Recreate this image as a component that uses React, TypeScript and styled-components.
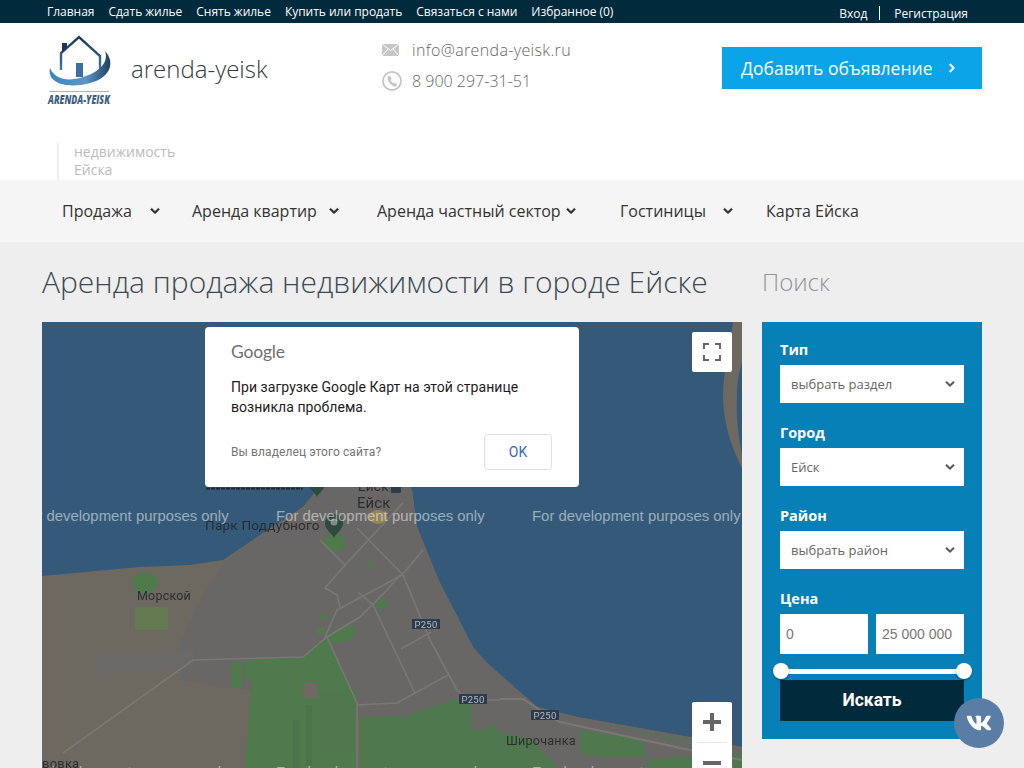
import React from "react";
import styled, { createGlobalStyle } from "styled-components";
import { FaChevronDown, FaChevronRight, FaVk } from "react-icons/fa";

const Global = createGlobalStyle`
  html, body { margin: 0; padding: 0; overflow: hidden; background: #eeeeee; }
  * { box-sizing: border-box; }
  #root { height: 768px; overflow: hidden; font-family: "Open Sans", "Liberation Sans", sans-serif; }
`;

const Page = styled.div`width: 1024px; height: 768px; overflow: hidden; position: relative;`;

const TopBar = styled.div`
  height: 23px; background: #022a3d; display: flex; justify-content: space-between; padding: 0 56px 0 47px;
`;
const TopLinks = styled.div`display: flex; gap: 14px; align-items: center; height: 23px;`;
const TopLink = styled.a`color: #fff; font-size: 12px; line-height: 23px; white-space: nowrap; letter-spacing: -.02px;`;
const AuthLinks = styled.div`display: flex; align-items: center; height: 23px; padding-top: 3px;`;
const AuthSep = styled.span`width: 1px; height: 14px; background: #fff; margin: 0 14px 0 12px;`;

const Header = styled.header`background: #fff; height: 157px; padding-top: 12px;`;
const HeaderRow = styled.div`display: flex; height: 108px;`;
const Brand = styled.div`width: 382px; padding-left: 47px; display: flex; align-items: flex-start; gap: 19px;`;
const BrandName = styled.div`
  font-size: 24px; font-weight: 300; color: #333b42; line-height: 33px; margin-top: 17px;
`;
const Contacts = styled.div`width: 340px; display: flex; flex-direction: column; gap: 9px; padding-top: 4px;`;
const ContactRow = styled.div<{ $spacing?: number }>`
  display: flex; align-items: center; height: 22px; gap: 10px; font-size: 16px; font-weight: 300; color: #666;
  letter-spacing: ${p => p.$spacing ?? 0}px;
`;
const AddButton = styled.a`
  width: 260px; height: 42px; margin-top: 12px; background: #0ba4e8; color: #fff; display: flex; align-items: center;
  padding-left: 19px; gap: 15px; font-size: 17.5px; font-weight: 400; white-space: nowrap;
  svg { width: 10px; height: 10px; stroke: currentColor; stroke-width: 30px; }
`;
const Tagline = styled.div`
  margin-left: 57px; padding: 0 0 0 15px; border-left: 2px solid #eeeeee; height: 37px;
  font-size: 14px; line-height: 18px; color: #bcbcbc;
`;

const Nav = styled.nav`
  height: 62px; background: #f5f5f5; padding-left: 62px; display: grid;
  grid-template-columns: 130px 185px 243px 146px auto; align-items: center;
`;
const NavItem = styled.a<{ $w?: number }>`
  display: flex; justify-content: space-between; align-items: center; width: ${p => (p.$w ? `${p.$w}px` : "auto")};
  font-size: 16px; color: #333; white-space: nowrap;
  svg { width: 10px; height: 10px; color: #2b2b2b; stroke: currentColor; stroke-width: 30px; }
`;

const Main = styled.main`
  display: grid; grid-template-columns: 700px 220px; grid-template-rows: 80px auto; column-gap: 20px; padding-left: 42px;
`;
const Title = styled.h1`
  margin: 0; align-self: center; font-size: 30px; font-weight: 300; color: #3d4a52; line-height: 82px; white-space: nowrap;
`;
const SearchTitle = styled.h2`
  margin: 0; align-self: center; font-size: 24px; font-weight: 300; color: #8f9498; line-height: 82px;
`;

const MapBox = styled.div`position: relative; width: 700px; height: 520px; overflow: hidden; background: #355a79;`;
const MapSvg = styled.svg`display: block; position: absolute; left: 0; top: 0;`;
const SoftLayer = styled.g`filter: blur(.45px);`;

const Dialog = styled.div`
  position: absolute; left: 163px; top: 5px; width: 374px; height: 160px; background: #fff; border-radius: 4px;
  padding: 15px 26px 0; font-family: Roboto, sans-serif;
`;
const GoogleWord = styled.div`
  font-family: Lato, "Open Sans", sans-serif; font-size: 17.5px; line-height: 20px; color: #6f6f6f; letter-spacing: -.2px;
`;
const DialogText = styled.div`margin-top: 15px; font-size: 14px; line-height: 20px; color: #1c1c1c; font-weight: 400; letter-spacing: .05px;`;
const DialogFoot = styled.div`display: flex; justify-content: space-between; align-items: center; margin-top: 17px;`;
const OwnerLink = styled.span`font-size: 12px; color: #757575; letter-spacing: .1px;`;
const OkButton = styled.button`
  width: 68px; height: 36px; background: #fff; border: 1px solid #e0e0e0; border-radius: 4px; margin-right: 1px;
  font-family: Roboto, sans-serif; font-size: 14px; color: #3a66c4; padding: 0;
`;
const MapControl = styled.div<{ $top: number }>`
  position: absolute; right: 10px; top: ${p => p.$top}px; width: 40px; background: #fff; border-radius: 2px;
  display: flex; flex-direction: column; align-items: center;
`;
const ControlCell = styled.div`width: 40px; height: 40px; display: flex; align-items: center; justify-content: center;`;
const ControlRule = styled.div`width: 30px; height: 1px; background: #e6e6e6;`;

const Panel = styled.aside`
  width: 220px; height: 417px; background: #0780b7; padding: 19px 18px;
`;
const Field = styled.div`margin-bottom: 21px;`;
const Label = styled.div`color: #fff; font-size: 14.5px; font-weight: 700; line-height: 18px; margin-bottom: 6px;`;
const SelectBox = styled.div`
  height: 38px; background: #fff; display: flex; align-items: center; justify-content: space-between;
  padding: 0 9px 0 11px; font-size: 13px; color: #666;
  svg { width: 10px; height: 10px; color: #555; stroke: currentColor; stroke-width: 24px; }
`;
const PriceRow = styled.div`display: flex; gap: 8px;`;
const PriceInput = styled.input`
  width: 88px; height: 40px; border: 0; padding: 0 0 0 6px; background: #fff; outline: none;
  font-family: "Liberation Sans", sans-serif; font-size: 14px; color: #777;
`;
const SliderTrack = styled.div`position: relative; height: 5px; background: #fff; margin-top: 15px; margin-bottom: 6px;`;
const Thumb = styled.span<{ $side: "left" | "right" }>`
  position: absolute; top: -6px; ${p => (p.$side === "left" ? "left: -7px" : "right: -8px")}; width: 16px; height: 16px;
  border-radius: 50%; background: #fff; box-shadow: 0 1px 2px rgba(0, 0, 0, .45);
`;
const SearchButton = styled.button`
  display: block; width: 184px; height: 41px; border: 0; background: #022a3d; color: #fff; padding: 0 0 2px;
  font-family: Roboto, sans-serif; font-size: 17.5px; font-weight: 700;
`;
const VkBadge = styled.a`
  position: absolute; left: 954px; top: 698px; width: 50px; height: 50px; border-radius: 50%; background: #5a7da6;
  display: flex; align-items: center; justify-content: center; color: #fff;
  svg { width: 26px; height: 26px; }
`;

const Logo = () => (
  <svg width="65" height="74" viewBox="47 35 65 74" style={{ flex: "none" }}>
    <defs>
      <linearGradient id="roof" x1="0" y1="0" x2="0" y2="1">
        <stop offset="0" stopColor="#1f3650" />
        <stop offset="1" stopColor="#3f78a8" />
      </linearGradient>
      <linearGradient id="swoosh" x1="0" y1="0" x2="1" y2="0">
        <stop offset="0" stopColor="#3d84bd" />
        <stop offset=".6" stopColor="#5b97c6" />
        <stop offset="1" stopColor="#1f3f5f" />
      </linearGradient>
    </defs>
    <path d="M61 70V53L79 37l21 19v14" fill="none" stroke="url(#roof)" strokeWidth="2.4" />
    <path d="M62 53V43h5v5z" fill="#1f3650" />
    <rect x="76" y="63" width="7" height="14" fill="#3a6f9f" />
    <path d="M50 68C47 80 60 86 74 85.5 93 85 113 77 110 60c-1-4-3-7-5-9 4 11-5 22-25 27-12 3-25 2-30-10z" fill="url(#swoosh)" />
    <rect x="49" y="91" width="60" height="1" fill="#b5b5b5" />
    <text x="48" y="103.5" textLength="62" lengthAdjust="spacingAndGlyphs" fontFamily="'Open Sans', sans-serif" fontStyle="italic" fontWeight="800" fontSize="12.5" fill="#3f5f82">ARENDA-YEISK</text>
  </svg>
);

const MailIcon = () => (
  <svg width="20" height="22" viewBox="0 0 20 22">
    <rect x="0" y="5" width="17" height="12" fill="#c6c6c6" />
    <path d="M0 5l8.5 6.5L17 5M0 17l6-7M17 17l-6-7" fill="none" stroke="#fff" strokeWidth="1" />
  </svg>
);
const PhoneIcon = () => (
  <svg width="20" height="22" viewBox="0 0 20 22">
    <circle cx="10" cy="11" r="9.1" fill="none" stroke="#c4c4c4" strokeWidth="1.7" />
    <path d="M6.6 5.9c-1.3 1-1.3 2.800-.3 4.800 1.100 2.300 3 4.500 5.300 5.500 1.300.6 2.500.4 3.100-.5l.5-1-2.600-2-1.100.9c-1.200-.7-2.400-2.100-2.900-3.500l1-1.100-1.500-3.100z" fill="#c4c4c4" />
  </svg>
);

const Shield = ({ x, y }: { x: number; y: number }) => (
  <g>
    <rect x={x} y={y} width="28" height="10" fill="#2e3b4d" />
    <text x={x + 14} y={y + 8.5} textAnchor="middle" fontFamily="Roboto, sans-serif" fontSize="9.5" fill="#b4bcc4" letterSpacing=".3">Р250</text>
  </g>
);
const Pin = ({ x, y }: { x: number; y: number }) => (
  <g>
    <path d={`M${x} ${y + 14}c-2-5-9-8-9-15a9 9 0 0 1 18 0c0 7-7 10-9 15z`} fill="#2d4a3c" />
    <circle cx={x} cy={y - 2} r="3.5" fill="#7f8f86" />
  </g>
);
const Mark = ({ x, y }: { x: number; y: number }) => (
  <text x={x} y={y} fontFamily="'Liberation Sans', sans-serif" fontSize="14.9" fill="#fff" fillOpacity=".5">For development purposes only</text>
);
const PlaceName = ({ x, y, size = 13, children }: { x: number; y: number; size?: number; children: string }) => (
  <text x={x} y={y} fontFamily="Roboto, sans-serif" fontSize={size} fill="#23282c" fillOpacity=".9" letterSpacing=".2">{children}</text>
);

/* map coordinates are page coordinates, the viewBox shifts them by the map's origin */
const Road = ({ d, w = 1.6 }: { d: string; w?: number }) => (
  <path d={d} fill="none" stroke="#7b7775" strokeWidth={w} />
);

const MapDrawing = () => (
  <MapSvg width="700" height="520" viewBox="42 322 700 520">
    <rect x="42" y="322" width="700" height="520" fill="#355a79" />
    <SoftLayer>
      <path d="M42 576L140 567 190 565 223 560 263 533 303 507 317 490 340 470 400 470 412 490 417 527 440 583 473 647 487 663 537 707 577 717 690 737 742 747V842H42z" fill="#6d6961" />
      <path d="M180 642L200 600 225 560 263 533 303 507 317 490 340 470 400 470 412 490 417 527 440 583 473 647 487 663 537 707 577 717 690 737 742 747V842H360V720L250 690 180 680z" fill="#696766" />
      <path d="M733 322C731 345 723 370 723 395 723 425 733 450 742 468V455C738 435 736 415 737 395 737 380 740 370 742 362V322z" fill="#6d6961" />
      <path d="M96 652h60l37-4v20l-97 6z" fill="#6b6868" />
      <path d="M133 577l13-5 12 6 0 8-8 7h-13l-4-8z" fill="#4f7a4b" />
      <path d="M135 607h33v23h-33z" fill="#647a50" />
      <path d="M327 638l-24 19-58 3-2 20h9l-7 88h112v-65z" fill="#4e7a4d" />
      <path d="M231 662h11v26h-11z" fill="#4e7a4d" />
      <path d="M320 690h37v62h-37z" fill="#50774e" />
      <path d="M293 720h7v48h-7zM306 705h6v60h-6z" fill="#4c744c" />
      <path d="M360 717h50l3-4 47-16 12 6v27h13l3-7 12 9 30 7 10 10 20 20v10H360z" fill="#50784f" />
      <path d="M580 730l63 10 2 17h-42l-23-4z" fill="#50784f" />
      <path d="M647 760l40-4 55-2v14h-95z" fill="#50784f" />
      <path d="M590 722l100 18 30 4-40-2z" fill="#59705a" />
      <path d="M303 683h15v15h-15z" fill="#6e6a62" />
      <path d="M323 540l10-7 10 3 3 10-8 7-10-3z" fill="#4f7a4b" />
      <path d="M367 563l4-3 4 3-2 5-5-1z" fill="#55794f" />
      <path d="M375 603l7-5 6 5-4 7-6-2z" fill="#4f7a4b" />
      <path d="M328 634l24-9 5 7-6 8-20 4z" fill="#4f7a4b" />
      <path d="M310 650l8-7 10 4 1 5h-19z" fill="#4f7a4b" />
      <path d="M320 615l6-2 2 6-6 2zM315 630l8-3 4 5-9 3z" fill="#55794f" />
      <Road d="M320 540L345 565 325 588 337 595 340 607" />
      <Road d="M345 565L403 503" />
      <Road d="M357 528L403 575 430 640 457 690 467 700H500" />
      <Road d="M325 637L337 610 402 575 423 550" />
      <Road d="M358 592L373 605 393 647 415 693" />
      <Road d="M63 753L193 660 303 657 327 637 360 617 387 590 400 575" />
      <Road d="M327 637L357 703V768" />
      <Road d="M357 705L397 703 448 675" />
      <Road d="M500 699H523L540 710 560 722 690 750 742 760" w={2} />
      <Road d="M401 649L431 632" />
      <Pin x={334} y={524} />
      <Pin x={317} y={483} />
      <ellipse cx="378" cy="517" rx="9" ry="7" fill="#b09a50" opacity=".6" />
      <path d="M206 488.5h97" stroke="#23282c" strokeWidth="2" strokeDasharray="4 1" fill="none" />
      <rect x="391" y="486" width="10" height="7" rx="1" fill="#2e3b4d" />
      <PlaceName x={358} y={491} size={13.5}>Ейск</PlaceName>
      <PlaceName x={137} y={600} size={12.5}>Морской</PlaceName>
      <PlaceName x={205} y={530} size={13.6}>Парк Поддубного</PlaceName>
      <PlaceName x={357} y={508} size={14.8}>Ейск</PlaceName>
      <PlaceName x={506} y={745} size={12.6}>Широчанка</PlaceName>
      <PlaceName x={42} y={768}>вовка</PlaceName>
      <Shield x={412} y={619} />
      <Shield x={459} y={694} />
      <Shield x={531} y={710} />
    </SoftLayer>
    <Mark x={20} y={521} />
    <Mark x={276} y={521} />
    <Mark x={532} y={521} />
    <Mark x={20} y={777} />
    <Mark x={276} y={777} />
    <Mark x={532} y={777} />
  </MapSvg>
);

const Corners = () => (
  <svg width="18" height="18" viewBox="0 0 18 18">
    <path d="M1 6V1h5M12 1h5v5M17 12v5h-5M6 17H1v-5" fill="none" stroke="#666" strokeWidth="2" />
  </svg>
);
const PlusIcon = () => (
  <svg width="18" height="18" viewBox="0 0 18 18"><path d="M7 0h4v7h7v4h-7v7H7v-7H0V7h7z" fill="#666" /></svg>
);
const MinusIcon = () => (
  <svg width="18" height="18" viewBox="0 0 18 18"><path d="M0 7h18v4H0z" fill="#666" /></svg>
);

const topLinks = ["Главная", "Сдать жилье", "Снять жилье", "Купить или продать", "Связаться с нами", "Избранное (0)"];
const navItems: { label: string; w?: number; arrow: boolean }[] = [
  { label: "Продажа", w: 98, arrow: true },
  { label: "Аренда квартир", w: 147, arrow: true },
  { label: "Аренда частный сектор", w: 199, arrow: true },
  { label: "Гостиницы", w: 113, arrow: true },
  { label: "Карта Ейска", arrow: false },
];
const selects = [
  { label: "Тип", value: "выбрать раздел" },
  { label: "Город", value: "Ейск" },
  { label: "Район", value: "выбрать район" },
];

export default function App() {
  return (
    <Page>
      <Global />
      <TopBar>
        <TopLinks>
          {topLinks.map(t => <TopLink key={t}>{t}</TopLink>)}
        </TopLinks>
        <AuthLinks>
          <TopLink>Вход</TopLink>
          <AuthSep />
          <TopLink>Регистрация</TopLink>
        </AuthLinks>
      </TopBar>
      <Header>
        <HeaderRow>
          <Brand>
            <Logo />
            <BrandName>arenda-yeisk</BrandName>
          </Brand>
          <Contacts>
            <ContactRow $spacing={0.35}><MailIcon />info@arenda-yeisk.ru</ContactRow>
            <ContactRow><PhoneIcon />8 900 297-31-51</ContactRow>
          </Contacts>
          <AddButton>Добавить объявление <FaChevronRight /></AddButton>
        </HeaderRow>
        <Tagline>недвижимость<br />Ейска</Tagline>
      </Header>
      <Nav>
        {navItems.map(n => (
          <NavItem key={n.label} $w={n.w}>{n.label}{n.arrow && <FaChevronDown />}</NavItem>
        ))}
      </Nav>
      <Main>
        <Title>Аренда продажа недвижимости в городе Ейске</Title>
        <SearchTitle>Поиск</SearchTitle>
        <MapBox>
          <MapDrawing />
          <Dialog>
            <GoogleWord>Google</GoogleWord>
            <DialogText>При загрузке Google Карт на этой странице<br />возникла проблема.</DialogText>
            <DialogFoot>
              <OwnerLink>Вы владелец этого сайта?</OwnerLink>
              <OkButton>OK</OkButton>
            </DialogFoot>
          </Dialog>
          <MapControl $top={10}><ControlCell><Corners /></ControlCell></MapControl>
          <MapControl $top={380}>
            <ControlCell><PlusIcon /></ControlCell>
            <ControlRule />
            <ControlCell><MinusIcon /></ControlCell>
          </MapControl>
        </MapBox>
        <Panel>
          {selects.map(s => (
            <Field key={s.label}>
              <Label>{s.label}</Label>
              <SelectBox>{s.value}<FaChevronDown /></SelectBox>
            </Field>
          ))}
          <Label>Цена</Label>
          <PriceRow>
            <PriceInput defaultValue="0" />
            <PriceInput defaultValue="25 000 000" />
          </PriceRow>
          <SliderTrack>
            <Thumb $side="left" />
            <Thumb $side="right" />
          </SliderTrack>
          <SearchButton>Искать</SearchButton>
        </Panel>
      </Main>
      <VkBadge><FaVk /></VkBadge>
    </Page>
  );
}
